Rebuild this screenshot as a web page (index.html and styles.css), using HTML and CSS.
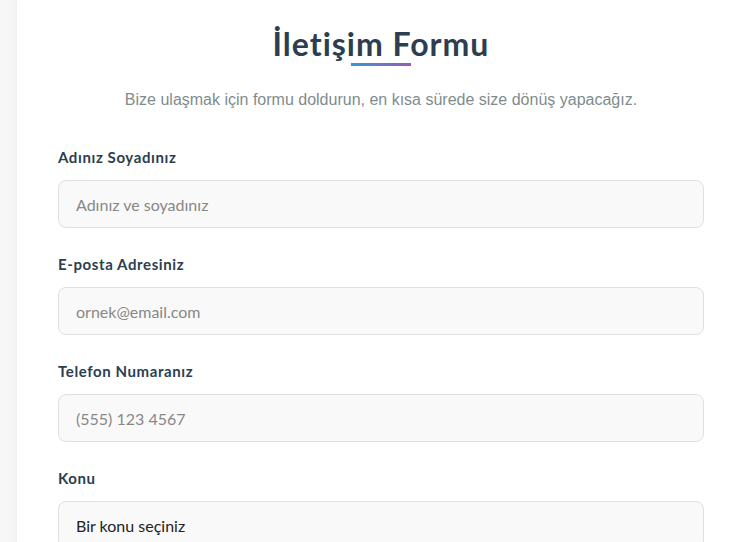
FILE: index.html
```html
<!DOCTYPE html>
<html lang="tr">
<head>
<meta charset="UTF-8">
<meta name="viewport" content="width=device-width, initial-scale=1.0">
<title>İletişim Formu</title>
<link rel="stylesheet" href="styles.css">
</head>
<body>
<div class="container">
    <h2 class="title">İletişim Formu</h2>
    <p class="subtitle">Bize ulaşmak için formu doldurun, en kısa sürede size dönüş yapacağız.</p>
    <form class="contact-form">
        <div class="form-group">
            <label for="name">Adınız Soyadınız</label>
            <input type="text" id="name" placeholder="Adınız ve soyadınız">
        </div>
        <div class="form-group">
            <label for="email">E-posta Adresiniz</label>
            <input type="email" id="email" placeholder="ornek@email.com">
        </div>
        <div class="form-group">
            <label for="phone">Telefon Numaranız</label>
            <input type="tel" id="phone" placeholder="(555) 123 4567">
        </div>
        <div class="form-group">
            <label for="subject">Konu</label>
            <select id="subject">
                <option>Bir konu seçiniz</option>
                <option>Genel Bilgi</option>
                <option>Destek</option>
                <option>Öneri</option>
            </select>
        </div>
    </form>
</div>
</body>
</html>
```

FILE: styles.css
```css
body {
    font-family: "Lato", "Liberation Sans", sans-serif;
    margin: 0;
    padding: 0 0 0 17px;
    background-color: #f7f7f7;
    overflow: hidden;
}
.container {
    width: 646px;
    padding: 28px 39px 40px 41px;
    background-color: #fff;
    box-shadow: 0 0 10px rgba(0, 0, 0, 0.06);
}
.title {
    position: relative;
    margin: 0;
    text-align: center;
    font-size: 32px;
    font-weight: 700;
    line-height: 32px;
    letter-spacing: 1px;
    color: #2c3e50;
    padding-bottom: 6px;
}
.title::after {
    content: "";
    position: absolute;
    left: 50%;
    bottom: 0;
    width: 60px;
    height: 3px;
    margin-left: -30px;
    background: linear-gradient(90deg, #3498db, #9b59b6);
}
.subtitle {
    margin: 22px 0 34px;
    text-align: center;
    font-family: "Liberation Sans", Arial, sans-serif;
    font-size: 16px;
    line-height: 24px;
    color: #7f8c8d;
}
.form-group {
    margin-bottom: 25px;
}
.form-group label {
    display: block;
    font-size: 15px;
    font-weight: 700;
    line-height: 22px;
    letter-spacing: 0.6px;
    color: #2c3e50;
    margin-bottom: 12px;
}
.form-group input,
.form-group select {
    display: block;
    box-sizing: border-box;
    width: 100%;
    height: 48px;
    padding: 0 17px;
    border: 1px solid #e0e0e0;
    border-radius: 8px;
    background-color: #f9f9f9;
    font-family: "Lato", "Liberation Sans", sans-serif;
    font-size: 16px;
    color: #222;
    appearance: none;
    -webkit-appearance: none;
}
.form-group input::placeholder {
    color: #888;
}
```
